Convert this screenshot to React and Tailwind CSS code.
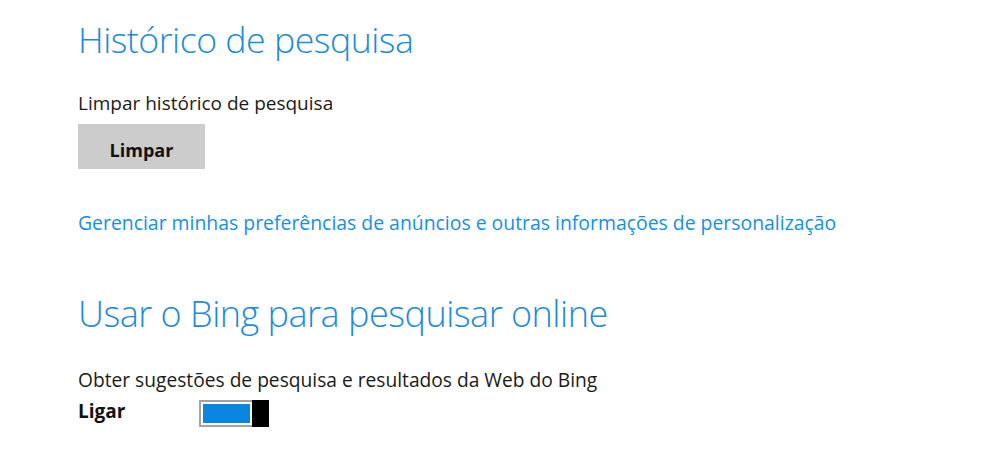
export default function App() {
  return (
    <div className="w-[984px] h-[474px] bg-white pl-[78px] pt-[15px]" style={{ fontFamily: '"Open Sans", "Noto Sans", sans-serif' }}>
      <h1 className="text-[35.7px] leading-[48px] font-light text-[#1a8cdb] tracking-[-0.5px]">Histórico de pesquisa</h1>
      <p className="mt-[28px] text-[19px] leading-[24px] text-[#1a1a1a]">Limpar histórico de pesquisa</p>
      <button className="mt-[9px] w-[127px] h-[45px] bg-[#cccccc] flex items-center justify-center pt-[6px] text-[18px] leading-[24px] font-bold text-[#111]">Limpar</button>
      <a className="block mt-[42px] text-[19.4px] leading-[24px] text-[#1490e4]">Gerenciar minhas preferências de anúncios e outras informações de personalização</a>
      <h2 className="mt-[55px] text-[36px] leading-[48px] font-light text-[#1a8cdb] tracking-[-0.5px]">Usar o Bing para pesquisar online</h2>
      <p className="mt-[30px] text-[19.2px] leading-[24px] text-[#1a1a1a]">Obter sugestões de pesquisa e resultados da Web do Bing</p>
      <div className="mt-[8px] flex items-start">
        <span className="w-[121px] -mt-[1px] text-[19px] leading-[24px] font-bold text-[#111]">Ligar</span>
        <div className="w-[70px] h-[27px] flex">
          <div className="flex-1 border-[2px] border-r-0 border-[#a3a3a3] bg-white p-[2px]">
            <div className="h-full bg-[#0a86e0]"></div>
          </div>
          <div className="w-[17px] bg-black"></div>
        </div>
      </div>
    </div>
  );
}
